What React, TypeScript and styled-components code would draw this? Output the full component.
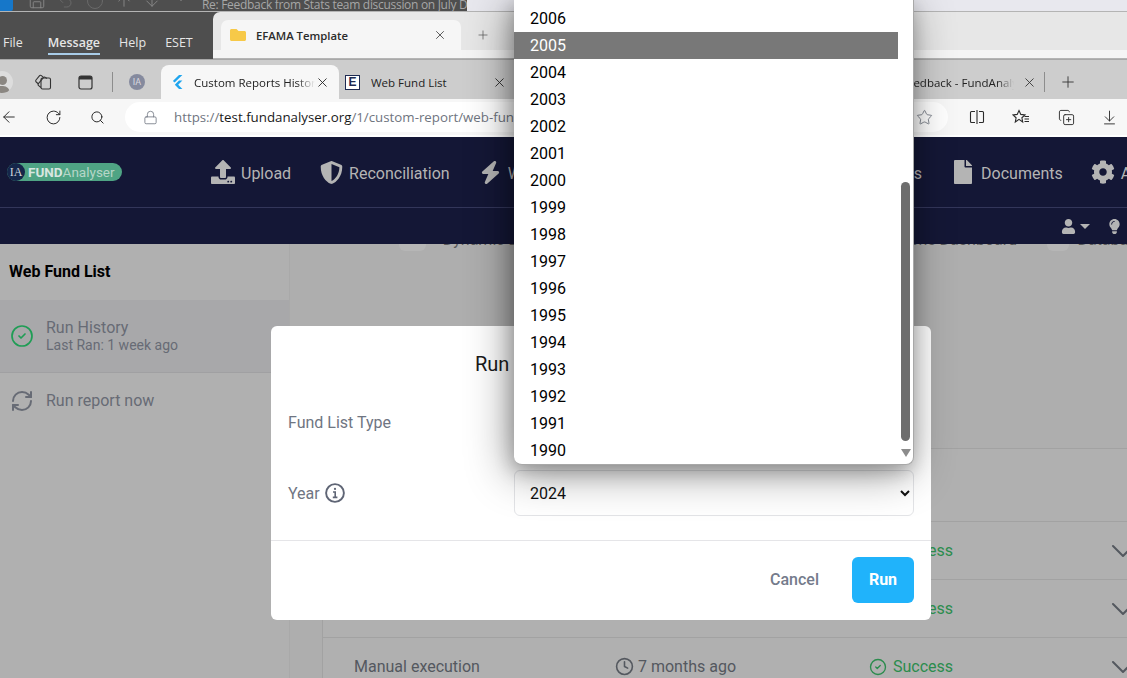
import React from 'react'
import styled, { createGlobalStyle } from 'styled-components'
import {
  ArrowDown, ArrowDownToLine, ArrowLeft, ArrowUp, ChevronDown, CircleCheck, Circle, Clock, Lock,
  Plus, RefreshCw, RotateCw, Save, Search, Star, Undo2, X, CopyPlus,
} from 'lucide-react'
import { FaChartBar, FaCog, FaFile, FaFolder, FaLightbulb, FaShieldAlt, FaUpload, FaUser } from 'react-icons/fa'
import { FaBolt } from 'react-icons/fa6'

const GlobalStyle = createGlobalStyle`
  html, body { margin: 0; padding: 0; background: #aeaeae; overflow: hidden; }
  * { box-sizing: border-box; }
  body { font-family: Roboto, "Liberation Sans", sans-serif; }
`

const Page = styled.div`
  position: relative;
  width: 1127px;
  height: 678px;
  overflow: hidden;
  display: flex;
  flex-direction: column;
`

/* windows behind the browser */
const TitleRow = styled.div`
  height: 12px;
  flex: none;
  display: flex;
  background: #e8e8ee;
  border-bottom: 1px solid #b4b4b4;
  overflow: hidden;
`
const OutlookTitle = styled.div`
  width: 467px;
  height: 12px;
  overflow: hidden;
  background: #4e4e4e;
  display: flex;
  align-items: flex-start;
  color: #8a8a8a;
`
const QuickIcon = styled.span<{ $w: number }>`
  width: ${p => p.$w}px;
  flex: none;
  display: flex;
  justify-content: center;
  margin-top: -8px;
`
const OutlookBadge = styled.span`
  width: 13px;
  height: 11px;
  flex: none;
  margin-right: 10px;
  background: #1677c9;
  border-radius: 0 0 2px 0;
`
const MailTitle = styled.span`
  margin-left: 7px;
  margin-top: -2px;
  font: 12px/14px "Open Sans", sans-serif;
  letter-spacing: -0.3px;
  color: #a6a6a6;
  white-space: nowrap;
`
const WindowRow = styled.div`
  height: 47px;
  flex: none;
  display: flex;
  background: #4e4e4e;
`
const Ribbon = styled.div`
  width: 213px;
  flex: none;
  display: flex;
  padding: 21px 0 0 3px;
  gap: 19px;
  font: 12.5px/20px "Open Sans", sans-serif;
  color: #e6e6e6;
`
const RibbonTab = styled.span<{ $active?: boolean; $after?: number }>`
  height: 20px;
  margin-right: ${p => p.$after ?? 0}px;
  font-weight: ${p => (p.$active ? 600 : 400)};
  ${p => p.$active && 'box-shadow: 0 2px 0 #a8cce8;'}
`
const Explorer = styled.div`
  flex: 1;
  display: flex;
  align-items: flex-start;
  border-radius: 7px 0 0 0;
  background: linear-gradient(180deg, #e7e7e7 38px, #f5f5f5 38px);
  border-bottom: 1px solid #b4b4b4;
  padding: 8px 0 0 8px;
`
const ExplorerTab = styled.div`
  width: 240px;
  height: 30px;
  background: #f6f6f6;
  border-radius: 7px 7px 0 0;
  display: flex;
  align-items: center;
  padding: 0 14px 0 9px;
  font: 600 11.3px "Open Sans", sans-serif;
  color: #2b2b2b;
  svg:first-child { color: #f7c948; margin-right: 10px; }
  span { flex: 1; }
`
const ExplorerPlus = styled.span`
  margin: 8px 0 0 15px;
  color: #555;
  display: flex;
`

/* edge tabs */
const TabStrip = styled.div`
  height: 40px;
  flex: none;
  background: #cdcdcd;
  border-top: 1px solid #a8a8a8;
  display: flex;
  align-items: flex-end;
  font: 11.5px "Open Sans", sans-serif;
  color: #222;
`
const StripButton = styled.span<{ $w: number }>`
  width: ${p => p.$w}px;
  height: 34px;
  flex: none;
  display: flex;
  align-items: center;
  justify-content: center;
  color: #333;
`
const Avatar = styled.span`
  width: 22px;
  height: 22px;
  margin-left: -9px;
  border-radius: 50%;
  background: #ddd;
  overflow: hidden;
  display: flex;
  flex-direction: column;
  align-items: center;
  justify-content: flex-end;
  flex: none;
  margin-bottom: 6px;
  i { width: 9px; height: 9px; border-radius: 50%; background: #8b8782; }
  b { width: 16px; height: 7px; margin-top: 1px; border-radius: 8px 8px 0 0; background: #8b8782; }
`
const StripDivider = styled.span`
  width: 1px;
  height: 20px;
  background: #8d8d8d;
  flex: none;
  margin-bottom: 7px;
`
const ProfileDot = styled.span`
  width: 16px;
  height: 16px;
  border-radius: 50%;
  background: #858a9e;
  color: #d8d8e0;
  font: 9px/16px Roboto, sans-serif;
  text-align: center;
`
const Tab = styled.div<{ $w: number; $active?: boolean; $pl?: number; $pr?: number }>`
  width: ${p => p.$w}px;
  height: 34px;
  flex: none;
  display: flex;
  align-items: center;
  border-radius: 8px 8px 0 0;
  background: ${p => (p.$active ? '#f7f7f7' : 'transparent')};
  padding: 0 ${p => p.$pr ?? 9}px 0 ${p => p.$pl ?? 10}px;
`
const TabFav = styled.span`
  width: 15px;
  height: 15px;
  flex: none;
  margin-right: 8px;
  display: flex;
`
const EFav = styled.span`
  width: 15px;
  height: 15px;
  flex: none;
  margin-right: 11px;
  background: #fff;
  border: 1.5px solid #1d2a52;
  color: #1d2a52;
  font: 900 12px/12px "Liberation Sans", sans-serif;
  text-align: center;
`
const TabLabel = styled.span<{ $fade?: boolean }>`
  flex: 1;
  white-space: nowrap;
  overflow: hidden;
  ${p => p.$fade && 'mask-image: linear-gradient(90deg, #000 85%, transparent);'}
`
const RightTabs = styled.div`
  margin-left: auto;
  display: flex;
  align-items: flex-end;
  height: 34px;
  padding-right: 36px;
`

/* address row */
const AddressRow = styled.div`
  height: 36px;
  flex: none;
  display: flex;
  align-items: center;
  background: #f7f7f7;
  color: #2b2b2b;
`
const ToolIcon = styled.span<{ $w: number }>`
  width: ${p => p.$w}px;
  flex: none;
  display: flex;
  justify-content: center;
`
const AddressPill = styled.div`
  width: 823px;
  height: 30px;
  flex: none;
  margin-left: 19px;
  background: #fff;
  border-radius: 15px;
  display: flex;
  align-items: center;
  padding-left: 18px;
  font: 13.3px "Open Sans", sans-serif;
  color: #6f7580;
  white-space: nowrap;
  b { font-weight: 400; color: #1a1a1a; }
`
const AddressText = styled.span`
  margin-left: 16px;
  flex: 1;
`
const WhiteGap = styled.div`
  height: 2px;
  flex: none;
  background: #fff;
`

/* app header */
const NavBar = styled.div`
  height: 71px;
  flex: none;
  background: #141736;
  border-bottom: 1px solid #33365a;
  overflow: hidden;
  display: flex;
  align-items: center;
  padding-left: 7px;
`
const Logo = styled.div`
  width: 115px;
  height: 18px;
  flex: none;
  margin-top: -1px;
  margin-right: 89px;
  border-radius: 9px;
  background: #4fa484;
  display: flex;
  align-items: center;
  font: 13.5px/18px Roboto, sans-serif;
  color: #b6d6c8;
  b { color: #d8e6e0; font-weight: 700; }
`
const LogoMark = styled.span`
  width: 18px;
  height: 18px;
  flex: none;
  margin-right: 3px;
  border-radius: 50%;
  background: #15264a;
  color: #cfd5de;
  font: 12px/18px "Liberation Serif", serif;
  text-align: center;
`
const NavItems = styled.div`
  width: 956px;
  flex: none;
  display: flex;
  gap: 29px;
  padding-top: 3px;
`
const NavItem = styled.div<{ $push?: boolean; $after?: number }>`
  display: flex;
  align-items: center;
  gap: 6px;
  flex: none;
  font-size: 16px;
  color: #b4b4b4;
  margin-right: ${p => p.$after ?? 0}px;
  svg { margin-top: -3px; }
  ${p => p.$push && 'margin-left: auto;'}
`
const SubBar = styled.div`
  height: 36px;
  flex: none;
  background: #141736;
  display: flex;
  align-items: center;
  justify-content: flex-end;
  gap: 17px;
  padding-right: 5px;
  color: #b4b4b4;
`
const UserMenu = styled.span`
  display: flex;
  align-items: center;
  gap: 4px;
  i {
    border-left: 5px solid transparent;
    border-right: 5px solid transparent;
    border-top: 5px solid #b4b4b4;
  }
`

/* page behind the modal */
const Body = styled.div`
  flex: 1;
  display: flex;
  min-height: 0;
`
const Sidebar = styled.div`
  width: 290px;
  flex: none;
  background: #b0b0b0;
  border-right: 1px solid #a9a9a9;
`
const SideTitle = styled.div`
  height: 56px;
  padding: 18px 0 0 9px;
  font-size: 16px;
  font-weight: 700;
  line-height: 19px;
  color: #000;
`
const SideRow = styled.div<{ $active?: boolean }>`
  display: flex;
  align-items: center;
  gap: 12px;
  padding: 0 10px;
  height: ${p => (p.$active ? 73 : 55)}px;
  background: ${p => (p.$active ? '#a8a8aa' : 'transparent')};
  border-bottom: ${p => (p.$active ? '1px solid #a0a0a2' : 'none')};
  color: #676b75;
  font-size: 16px;
`
const SideMeta = styled.div`
  font-size: 14px;
  line-height: 17px;
`
const Main = styled.div`
  flex: 1;
  min-width: 0;
  display: flex;
  flex-direction: column;
  background: #aeaeae;
`
const ClippedHeadings = styled.div`
  height: 7px;
  flex: none;
  overflow: hidden;
  display: flex;
  font-size: 16px;
  line-height: 18px;
  color: #5a5a5a;
  white-space: nowrap;
`
const Heading = styled.span<{ $w: number }>`
  width: ${p => p.$w}px;
  flex: none;
  margin-top: -13px;
  text-align: right;
`
const FaintIcon = styled.i<{ $left: number; $w: number }>`
  width: ${p => p.$w}px;
  height: 7px;
  flex: none;
  margin-left: ${p => p.$left}px;
  border-radius: 0 0 6px 6px;
  background: #b6b6b6;
`
const Card = styled.div`
  margin: 197px 0 0 32px;
  flex: 1;
  background: #b0b0b0;
  border-left: 1px solid #a2a2a2;
  border-top: 1px solid #a2a2a2;
`
const TableHead = styled.div`
  height: 72px;
`
const Row = styled.div`
  height: 58px;
  display: grid;
  grid-template-columns: 261px 254px 243px 1fr;
  align-items: center;
  padding-left: 31px;
  border-top: 1px solid #a2a2a2;
  font-size: 16px;
  color: #54585f;
  white-space: nowrap;
`
const Cell = styled.span`
  display: flex;
  align-items: center;
  gap: 4px;
`
const Success = styled(Cell)`
  color: #2b8c4d;
  gap: 6px;
`
const Chevron = styled.span`
  color: #54585f;
  display: flex;
  margin-left: -9px;
`

/* modal */
const Modal = styled.div`
  position: absolute;
  left: 271px;
  top: 326px;
  width: 660px;
  height: 294px;
  background: #fff;
  border-radius: 6px;
`
const ModalTitle = styled.div`
  height: 73px;
  padding: 26px 0 0 204px;
  font-size: 20px;
  line-height: 24px;
  color: #1a1a1a;
`
const FormGrid = styled.div`
  display: grid;
  grid-template-columns: 226px 400px;
  row-gap: 25px;
  align-items: center;
  padding: 0 17px 24px;
`
const Label = styled.label`
  display: flex;
  align-items: center;
  gap: 4px;
  font-size: 16px;
  color: #6f7582;
`
const Select = styled.select`
  width: 400px;
  height: 46px;
  padding: 0 11px;
  border: 1px solid #e3e4e7;
  border-radius: 6px;
  background-color: #fff;
  font: 16px Roboto, sans-serif;
  color: #111;
`
const ModalFooter = styled.div`
  height: 80px;
  border-top: 1px solid #e5e5e8;
  display: flex;
  align-items: center;
  justify-content: flex-end;
  gap: 33px;
  padding: 0 17px 2px;
`
const CancelButton = styled.button`
  border: 0;
  background: none;
  padding: 0;
  font: 500 16px Roboto, sans-serif;
  color: #747b8b;
`
const RunButton = styled.button`
  width: 62px;
  height: 46px;
  border: 0;
  border-radius: 6px;
  background: #20b3fb;
  font: 700 16px Roboto, sans-serif;
  color: #fff;
`

/* open native select list */
const Dropdown = styled.div`
  position: absolute;
  left: 514px;
  top: 0;
  width: 400px;
  height: 465px;
  display: flex;
  background: #fff;
  border: solid #a8a8a8;
  border-width: 0 1px 1px 0;
  border-radius: 0 0 8px 8px;
  padding-top: 5px;
  box-shadow: -4px 8px 44px rgba(0, 0, 0, 0.42), -2px 6px 18px rgba(0, 0, 0, 0.22);
`
const OptionList = styled.div`
  flex: 1;
`
const Option = styled.div<{ $selected?: boolean }>`
  height: 27px;
  padding-left: 16px;
  font-size: 16px;
  line-height: 27px;
  background: ${p => (p.$selected ? '#787878' : 'transparent')};
  color: ${p => (p.$selected ? '#fff' : '#000')};
`
const ScrollTrack = styled.div`
  width: 15px;
  flex: none;
  padding: 177px 3px 0 3px;
  display: flex;
  flex-direction: column;
  align-items: center;
`
const ScrollThumb = styled.div`
  width: 9px;
  height: 259px;
  flex: none;
  border-radius: 5px;
  background: #6d6d6d;
`
const ScrollArrow = styled.i`
  margin-top: 8px;
  border-left: 5px solid transparent;
  border-right: 5px solid transparent;
  border-top: 8px solid #8c8c8c;
`

const years = Array.from({ length: 17 }, (_, i) => 2006 - i)
const rows = ['Manual execution', 'Manual execution', 'Manual execution']

const FlutterMark = () => (
  <svg width="13" height="16" viewBox="0 0 13 16" fill="#1fa5ee">
    <path d="M8 0h3.4L3.6 7.6 1.9 5.9zM8 5.6h3.4L7.2 9.8l4.2 4.2H8L3.8 9.8z" />
  </svg>
)

const CollectionsIcon = () => (
  <svg width="18" height="18" viewBox="0 0 18 18" fill="none" stroke="currentColor" strokeWidth="1.1">
    <rect x="7" y="5" width="9.5" height="11" rx="1.5" />
    <path d="M7 14.5 4.6 12.6a1.4 1.4 0 0 1-.2-2l5-6a1.4 1.4 0 0 1 2-.2l1.4 1.1" />
    <path d="M4.5 11 2.2 9a1.4 1.4 0 0 1-.2-2l3.4-4.2a1.4 1.4 0 0 1 2-.2l1.8 1.5" />
  </svg>
)

const TabActionsIcon = () => (
  <svg width="15" height="15" viewBox="0 0 15 15">
    <rect x="1" y="1" width="13" height="13" rx="2" fill="none" stroke="currentColor" strokeWidth="1.2" />
    <path d="M1 3a2 2 0 0 1 2-2h9a2 2 0 0 1 2 2v1.5H1z" fill="currentColor" />
  </svg>
)

const SplitIcon = () => (
  <svg width="16" height="16" viewBox="0 0 16 16" fill="none" stroke="currentColor" strokeWidth="1.1">
    <path d="M6 2.5H2.5a1 1 0 0 0-1 1v9a1 1 0 0 0 1 1H6M10 2.5h3.5a1 1 0 0 1 1 1v9a1 1 0 0 1-1 1H10M8 1v14" />
  </svg>
)

const FavouritesIcon = () => (
  <svg width="18" height="16" viewBox="0 0 18 16" fill="none" stroke="currentColor" strokeWidth="1.1">
    <path d="M7 1.5l1.8 3.9 4.2.5-3.1 2.9.8 4.2L7 10.4l-3.7 2.6.8-4.2L1 5.9l4.2-.5z" />
    <path d="M12.5 7.5h4.5M12.5 10h4.5M12.5 12.5h4.5" />
  </svg>
)

const InfoIcon = () => (
  <svg width="22" height="22" viewBox="0 0 22 22" fill="none" stroke="#5f6575" strokeWidth="1.9">
    <circle cx="11" cy="11" r="8.9" />
    <path d="M9 10h2.2v5.2M8.8 15.4h4.6" strokeWidth="1.6" />
    <circle cx="11" cy="6.9" r="1.1" fill="#5f6575" stroke="none" />
  </svg>
)

export default function App() {
  return (
    <Page>
      <GlobalStyle />
      <TitleRow>
        <OutlookTitle>
          <OutlookBadge />
          <QuickIcon $w={28}><Save size={18} strokeWidth={1.2} /></QuickIcon>
          <QuickIcon $w={28}><Undo2 size={18} strokeWidth={1.2} color="#6c6c6c" /></QuickIcon>
          <QuickIcon $w={31}><Circle size={18} strokeWidth={1.2} color="#6c6c6c" /></QuickIcon>
          <QuickIcon $w={27}><ArrowUp size={18} strokeWidth={1.2} /></QuickIcon>
          <QuickIcon $w={30}><ArrowDown size={18} strokeWidth={1.2} /></QuickIcon>
          <QuickIcon $w={28}><ChevronDown size={14} strokeWidth={1.4} /></QuickIcon>
          <MailTitle>Re: Feedback from Stats team discussion on July D</MailTitle>
        </OutlookTitle>
      </TitleRow>
      <WindowRow>
        <Ribbon>
          <RibbonTab $after={6}>File</RibbonTab>
          <RibbonTab $active>Message</RibbonTab>
          <RibbonTab>Help</RibbonTab>
          <RibbonTab>ESET</RibbonTab>
        </Ribbon>
        <Explorer>
          <ExplorerTab>
            <FaFolder size={16} />
            <span>EFAMA Template</span>
            <X size={14} strokeWidth={1.3} />
          </ExplorerTab>
          <ExplorerPlus><Plus size={14} strokeWidth={1.2} /></ExplorerPlus>
        </Explorer>
      </WindowRow>

      <TabStrip>
        <Avatar><i /><b /></Avatar>
        <StripButton $w={60}><CollectionsIcon /></StripButton>
        <StripButton $w={24}><TabActionsIcon /></StripButton>
        <StripButton $w={15} />
        <StripDivider />
        <StripButton $w={48}><ProfileDot>IA</ProfileDot></StripButton>
        <Tab $w={178} $active>
          <TabFav><FlutterMark /></TabFav>
          <TabLabel $fade>Custom Reports History</TabLabel>
          <X size={15} strokeWidth={1.4} />
        </Tab>
        <Tab $w={173} $pl={6} $pr={5}>
          <EFav>E</EFav>
          <TabLabel>Web Fund List</TabLabel>
          <X size={15} strokeWidth={1.4} />
        </Tab>
        <RightTabs>
          <Tab $w={113} $pl={0} $pr={0}>
            <TabLabel $fade>Feedback - FundAnalyser</TabLabel>
          </Tab>
          <StripButton $w={30}><X size={15} strokeWidth={1.4} /></StripButton>
          <StripDivider />
          <StripButton $w={46}><Plus size={18} strokeWidth={1.2} /></StripButton>
        </RightTabs>
      </TabStrip>

      <AddressRow>
        <ToolIcon $w={18}><ArrowLeft size={18} strokeWidth={1.3} /></ToolIcon>
        <ToolIcon $w={70}><RotateCw size={17} strokeWidth={1.4} /></ToolIcon>
        <ToolIcon $w={18}><Search size={15} strokeWidth={1.6} /></ToolIcon>
        <AddressPill>
          <Lock size={15} strokeWidth={1.3} />
          <AddressText>https://<b>test.fundanalyser.org</b>/1/custom-report/web-fund-list</AddressText>
          <ToolIcon $w={48}><Star size={17} strokeWidth={1.2} /></ToolIcon>
        </AddressPill>
        <ToolIcon $w={58}><SplitIcon /></ToolIcon>
        <ToolIcon $w={30}><FavouritesIcon /></ToolIcon>
        <ToolIcon $w={60}><CopyPlus size={17} strokeWidth={1.3} /></ToolIcon>
        <ToolIcon $w={26}><ArrowDownToLine size={17} strokeWidth={1.3} /></ToolIcon>
      </AddressRow>
      <WhiteGap />

      <NavBar>
        <Logo>
          <LogoMark>IA</LogoMark>
          <b>FUND</b>Analyser
        </Logo>
        <NavItems>
          <NavItem><FaUpload size={24} />Upload</NavItem>
          <NavItem><FaShieldAlt size={23} />Reconciliation</NavItem>
          <NavItem><FaBolt size={23} />Workflows</NavItem>
          <NavItem $push><FaChartBar size={22} />Dashboards</NavItem>
          <NavItem $after={-1}><FaFile size={24} />Documents</NavItem>
          <NavItem><FaCog size={24} />Admin</NavItem>
        </NavItems>
      </NavBar>
      <SubBar>
        <UserMenu><FaUser size={15} /><i /></UserMenu>
        <FaLightbulb size={15} />
      </SubBar>

      <Body>
        <Sidebar>
          <SideTitle>Web Fund List</SideTitle>
          <SideRow $active>
            <CircleCheck size={24} strokeWidth={1.7} color="#1f9d55" />
            <div>
              Run History
              <SideMeta>Last Ran: 1 week ago</SideMeta>
            </div>
          </SideRow>
          <SideRow>
            <RefreshCw size={24} strokeWidth={2} />
            Run report now
          </SideRow>
        </Sidebar>
        <Main>
          <ClippedHeadings>
            <FaintIcon $left={109} $w={27} />
            <Heading $w={160}>Dynamic Dashboard</Heading>
            <Heading $w={431}>Operations Dashboard</Heading>
            <FaintIcon $left={30} $w={22} />
            <Heading $w={76}>Database</Heading>
          </ClippedHeadings>
          <Card>
            <TableHead />
            {rows.map((name, i) => (
              <Row key={i}>
                <span>{name}</span>
                <Cell><Clock size={19} strokeWidth={2} />7 months ago</Cell>
                <Success><CircleCheck size={18} strokeWidth={1.8} />Success</Success>
                <Chevron><ChevronDown size={40} strokeWidth={1.2} /></Chevron>
              </Row>
            ))}
          </Card>
        </Main>
      </Body>

      <Modal>
        <ModalTitle>Run</ModalTitle>
        <FormGrid>
          <Label>Fund List Type</Label>
          <Select defaultValue="Web"><option>Web</option></Select>
          <Label>Year <InfoIcon /></Label>
          <Select defaultValue="2024"><option>2024</option></Select>
        </FormGrid>
        <ModalFooter>
          <CancelButton>Cancel</CancelButton>
          <RunButton>Run</RunButton>
        </ModalFooter>
      </Modal>

      <Dropdown>
        <OptionList>
          {years.map(y => <Option key={y} $selected={y === 2005}>{y}</Option>)}
        </OptionList>
        <ScrollTrack>
          <ScrollThumb />
          <ScrollArrow />
        </ScrollTrack>
      </Dropdown>
    </Page>
  )
}
